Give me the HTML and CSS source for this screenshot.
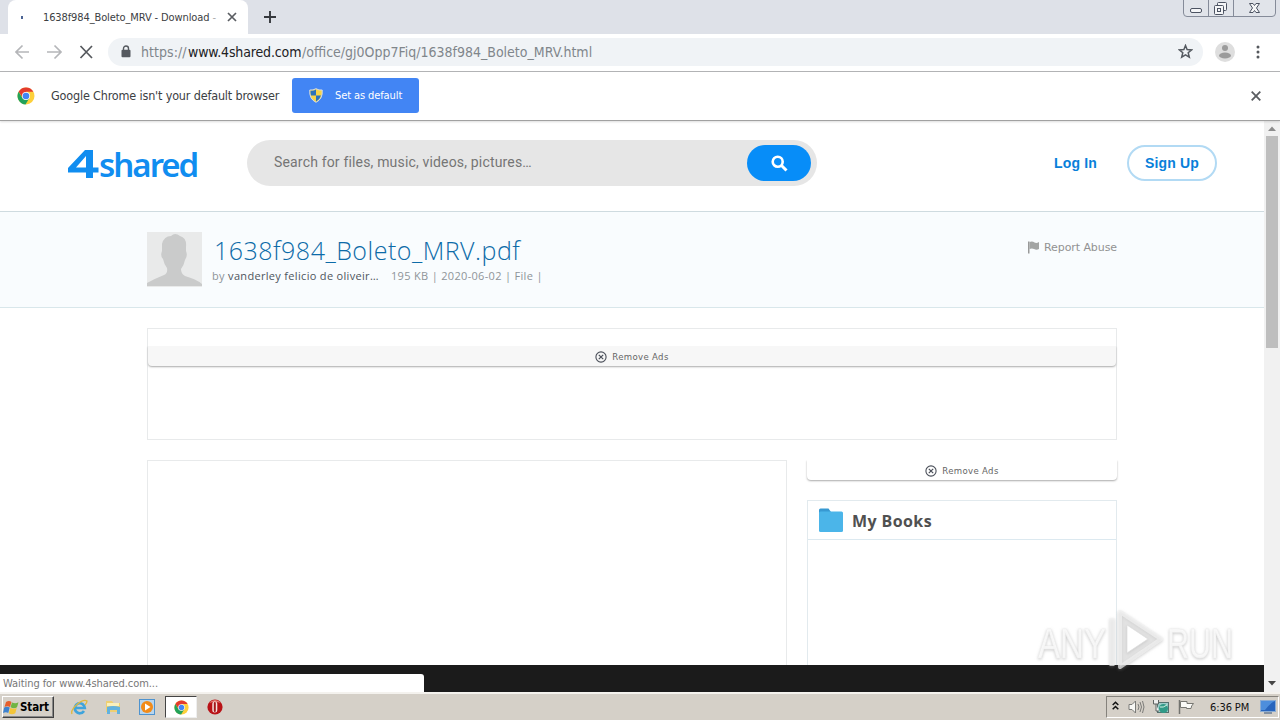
FILE: index.html
```html
<!DOCTYPE html>
<html lang="en">
<head>
<meta charset="utf-8">
<title>1638f984_Boleto_MRV - Download</title>
<link rel="stylesheet" href="styles.css">
</head>
<body>
<svg class="defs" width="0" height="0">
  <symbol id="chrome" viewBox="0 0 18 18">
    <circle cx="9" cy="9" r="8.500" fill="#fdd03b"/>
    <path d="M1.600 4.800A8.500 8.500 0 0 1 16.400 4.800H9L6 11Z" fill="#e33b2e"/>
    <path d="M1.600 4.800A8.500 8.500 0 0 0 8.500 17.500L12.400 11L9 12.800L5.400 11Z" fill="#22a25a"/>
    <circle cx="9" cy="9" r="4" fill="#fff"/><circle cx="9" cy="9" r="3.300" fill="#4285f4"/>
  </symbol>
  <symbol id="remove" viewBox="0 0 12 12">
    <circle cx="6" cy="6" r="5.100" fill="none" stroke="#4a4f59" stroke-width="1.100"/>
    <path d="M3.800 3.800L8.200 8.200M8.200 3.800L3.800 8.200" stroke="#4a4f59" stroke-width="1.200"/>
  </symbol>
</svg>

<div class="tabstrip">
  <div class="tab">
    <i class="spinner"></i>
    <span class="tab-title">1638f984_Boleto_MRV - Download <b>-</b></span>
    <svg class="tab-close" width="10" height="10" viewBox="0 0 10 10"><path d="M1 1L9 9M9 1L1 9" stroke="#5a5d62" stroke-width="1.700"/></svg>
  </div>
  <svg class="new-tab" width="12" height="12" viewBox="0 0 12 12"><path d="M6 0V12M0 6H12" stroke="#35383d" stroke-width="1.900"/></svg>
  <svg class="window-buttons" width="93" height="18" viewBox="0 0 93 18">
    <path d="M.5 0V13Q.5 16.500 4 16.500H89Q92.500 16.500 92.500 13V0M25.500 0V16M50.500 0V16" fill="#e1e4ea" stroke="#858b99"/>
    <g fill="#f4f5f7" stroke="#4c5362"><rect x="7.500" y="8.500" width="11" height="4" rx="1.500"/><rect x="34.500" y="2.500" width="9" height="8" rx="1"/><rect x="31.500" y="5.500" width="9" height="9" rx="1"/><rect x="34.500" y="8.500" width="3" height="3"/>
    <path d="M66.500 3.500H70L71.500 5.500L73 3.500H76.500L73.500 8L76.500 12.500H73L71.500 10.500L70 12.500H66.500L69.500 8Z"/></g>
  </svg>
</div>

<div class="toolbar">
  <svg class="nav" width="80" height="16" viewBox="0 0 80 16" fill="none" stroke-width="1.700">
    <path d="M14 8H1.500M7.500 1.500L1 8L7.500 14.500M32 8H45.500M39.500 1.500L46 8L39.500 14.500" stroke="#b5b6b9"/>
    <path d="M65.500 2L77 14M77 2L65.500 14" stroke="#55585d" stroke-width="1.700"/>
  </svg>
  <div class="omnibox">
    <svg width="10" height="13" viewBox="0 0 10 13"><path d="M2.500 5V3.500a2.500 2.500 0 0 1 5 0V5" fill="none" stroke="#55595f" stroke-width="1.400"/><rect x=".5" y="4.800" width="9" height="7.500" rx="1" fill="#55595f"/></svg>
    <span class="url"><span class="scheme">https://</span><span class="host">www.4shared.com</span><span class="path">/office/gj0Opp7Fiq/1638f984_Boleto_MRV.html</span></span>
    <svg class="star" width="15" height="15" viewBox="0 0 15 15"><path d="M7.500 1.500L9.100 5.500L13.600 5.900L10.200 8.800L11.300 13.200L7.500 10.800L3.700 13.200L4.800 8.800L1.400 5.900L5.900 5.500Z" fill="none" stroke="#555a61" stroke-width="1.500"/></svg>
  </div>
  <svg class="profile" width="20" height="20" viewBox="0 0 20 20"><circle cx="10" cy="10" r="10" fill="#dedede"/><circle cx="10" cy="6" r="3" fill="#9b9b9b"/><ellipse cx="10" cy="13.500" rx="6" ry="3" fill="#9b9b9b"/></svg>
  <svg class="menu" width="4" height="14" viewBox="0 0 4 14" fill="#55585d"><circle cx="2" cy="2" r="1.500"/><circle cx="2" cy="7" r="1.500"/><circle cx="2" cy="12" r="1.500"/></svg>
</div>

<div class="infobar">
  <svg width="18" height="18"><use href="#chrome"/></svg>
  <span class="infobar-text">Google Chrome isn't your default browser</span>
  <div class="default-button">
    <svg width="14" height="15" viewBox="0 0 14 15"><path d="M7 .7Q10 2.500 13.200 2Q14 11 7 14.300Q0 11 .8 2Q4 2.500 7 .7Z" fill="#f7d447" stroke="#d7dde3"/><path d="M7 1.500Q4.500 3 1.500 2.600Q1.300 5.500 2 7.500H7ZM7 7.500H12Q10.700 11.800 7 13.600Z" fill="#2c72ba"/></svg>
    <span>Set as default</span>
  </div>
  <svg class="infobar-close" width="10" height="10" viewBox="0 0 10 10"><path d="M.7.7L9.300 9.300M9.300.7L.7 9.300" stroke="#5a5d61" stroke-width="1.800"/></svg>
</div>

<div class="viewport">
  <div class="page">
    <header class="site-header">
      <div class="logo"><svg width="31" height="28" viewBox="0 0 31 28"><path d="M17 0H25V17.500H30.500V22.500H25V28H18V22.500H0V18ZM18 6L8 17.500H18Z" fill="#108df0" fill-rule="evenodd"/></svg><span>shared</span></div>
      <div class="search">
        <span>Search for files, music, videos, pictures…</span>
        <div class="search-button"><svg width="17" height="17" viewBox="0 0 17 17" fill="none" stroke="#fff"><circle cx="6.700" cy="6.700" r="5" stroke-width="2.600"/><path d="M10.500 10.500L15.500 15.500" stroke-width="3"/></svg></div>
      </div>
      <span class="login">Log In</span>
      <div class="signup"><span>Sign Up</span></div>
    </header>
    <section class="file-header">
      <svg class="avatar" width="55" height="55" viewBox="0 0 55 55"><path d="M0 0H55V55H0Z" fill="#e9eaea"/><path d="M0 54V51Q7 47 17 43Q21 41 20 36Q17 32 16 27Q13 24 15 19V12Q17 4 24 4Q28 0 33 4Q40 6 39 15V19Q41 24 38 28Q37 33 34 37Q34 42 38 44Q49 47 55 52V54Z" fill="#cacbcb"/></svg>
      <div class="file-info">
        <div class="file-name">1638f984_Boleto_MRV.pdf</div>
        <div class="file-meta"><span class="by">by <span class="owner">vanderley felicio de oliveir…</span></span><span class="details">195 KB | 2020-06-02 | File |</span></div>
      </div>
      <div class="report"><svg width="11" height="13" viewBox="0 0 11 13"><path d="M0 .5H1.500V12.500H0Z" fill="#999"/><path d="M1.500 1Q4.500 0 6.500 1.500Q8.500 2.500 11 1V8Q8.500 9.500 6 8Q4 7 1.500 8Z" fill="#a3a5a4"/></svg><span>Report Abuse</span></div>
    </section>
    <main class="content">
      <div class="banner"><div class="remove-ads shaded"><svg width="12" height="12"><use href="#remove"/></svg><span>Remove Ads</span></div></div>
      <div class="columns">
        <div class="preview"></div>
        <aside class="sidebar">
          <div class="remove-ads"><svg width="12" height="12"><use href="#remove"/></svg><span>Remove Ads</span></div>
          <div class="folder-card">
            <div class="folder-title"><svg width="25" height="25" viewBox="0 0 25 25"><path d="M0 5V2Q0 .5 1.500 .5H9.500L12 4V8H0Z" fill="#3799d2"/><rect y="3.500" width="24" height="20.500" rx="1.500" fill="#4bb5e9"/></svg><span>My Books</span></div>
          </div>
        </aside>
      </div>
    </main>
  </div>
  <div class="scrollbar">
    <svg width="8" height="5" viewBox="0 0 8 5"><path d="M0 5L4 .5L8 5Z" fill="#8c8c8c"/></svg>
    <div class="thumb"></div>
    <svg class="down" width="8" height="5" viewBox="0 0 8 5"><path d="M0 0L4 4.500L8 0Z" fill="#454545"/></svg>
  </div>
  <div class="dark-strip"></div>
  <div class="status"><span>Waiting for www.4shared.com...</span></div>
  <svg class="watermark" width="240" height="68" viewBox="0 0 240 68">
    <g class="mark-text"><text transform="translate(8 52) scale(.77 1)">ANY</text><text transform="translate(137 52) scale(.71 1)">RUN</text></g>
    <g class="mark-shape"><path d="M82 12V60" class="mark-bar"/><path d="M90 6L131 33L90 61Z"/><path d="M97 19L118 33L97 47Z" class="mark-inner"/></g>
  </svg>
</div>

<footer class="taskbar">
  <div class="start"><svg width="16" height="15" viewBox="0 0 16 15"><path d="M3 2Q6 0 8.500 2L7 7Q4.500 5.500 1.500 7Z" fill="#e55f2e"/><path d="M9 2.500Q12.500 4 15.500 2.200L14 7.300Q11 9 7.500 7.300Z" fill="#70b544"/><path d="M1.200 7.500Q4 6 6.700 7.500L5.300 13Q3 11.500 0 13Z" fill="#3d82cf"/><path d="M7.200 8Q11 9.500 13.700 8L12.300 13.300Q9 15 5.800 13.400Z" fill="#f3c539"/></svg><span>Start</span></div>
  <div class="launchers">
    <svg width="17" height="17" viewBox="0 0 17 17"><path d="M13 12A5 5 0 1 1 13.800 9H4.500" fill="none" stroke="#3fa4dc" stroke-width="2.700"/><path d="M1 15Q-.5 11 6 5.500T16 2Q16 4 14 6" fill="none" stroke="#dfb83d" stroke-width="1.300"/></svg>
    <svg width="17" height="16" viewBox="0 0 17 16"><path d="M1 2H7L8.500 4H15V13H1Z" fill="#eecf72"/><path d="M2 4H14V7H2Z" fill="#faf0bc"/><path d="M2 8Q8 6 15 8V15H12V11H5V15H2Z" fill="#62b2df"/></svg>
    <svg width="17" height="17" viewBox="0 0 17 17"><rect x=".5" y=".5" width="15" height="15" fill="#b8d5ed" stroke="#4e93cf"/><circle cx="8" cy="8" r="6" fill="#f28b19"/><path d="M6 4.500L11.500 8L6 11.500Z" fill="#fff"/></svg>
    <div class="active-app"><svg width="15" height="15"><use href="#chrome"/></svg></div>
    <svg class="opera" width="16" height="16" viewBox="0 0 16 16"><circle cx="8" cy="8" r="7.600" fill="#b91217"/><path d="M2 4Q8-2 14 4Q8 2 2 4Z" fill="#e57a73"/><rect x="5.300" y="2.500" width="5" height="11" rx="2.500" fill="#f6e3e0"/><rect x="6.800" y="3" width="2" height="10" rx="1" fill="#a4171a"/></svg>
  </div>
  <div class="tray">
    <svg class="expand" width="7" height="9" viewBox="0 0 7 9"><path d="M.7 4L3.500 1.200L6.300 4M.7 8.300L3.500 5.500L6.300 8.300" fill="none" stroke="#111" stroke-width="1.500"/></svg>
    <svg width="17" height="16" viewBox="0 0 17 16" fill="none" stroke="#7b7b78"><path d="M1 5.500H4L7.500 2V14L4 10.500H1Z" fill="#f8f8f5"/><path d="M10 5Q12 8 10 11M12 3Q15 8 12 13M14.500 2Q17.500 8 14.500 14"/></svg>
    <svg width="17" height="16" viewBox="0 0 17 16"><rect x="4.500" y="3.500" width="11" height="10" fill="#9ccdc9" stroke="#55716f"/><circle cx="10.500" cy="9.500" r="4.500" fill="#309a87"/><path d="M7 8Q10 9 14 6" stroke="#d3f0e1" fill="none"/><path d="M.5 1V5H5.500V1M3 5V12H6" fill="#eee" stroke="#5f6462"/></svg>
    <svg width="17" height="16" viewBox="0 0 17 16"><path d="M1.500 1V15" stroke="#73736f" stroke-width="1.500"/><path d="M2.500 2.500H9V4.500H15.500Q13 7 13 9.500H8.500V8.500H2.500Z" fill="#fafaf7" stroke="#777772"/></svg>
    <span class="clock">6:36 PM</span>
    <svg class="monitor" width="16" height="14" viewBox="0 0 16 14"><rect x=".5" y=".5" width="15" height="11" fill="#2865bd" stroke="#8aacd4"/><path d="M1 1H15Q10 3 5 10H1Z" fill="#4d8edc"/><path d="M4 13H12" stroke="#667b94" stroke-width="1.500"/></svg>
  </div>
</footer>
</body>
</html>
```
FILE: styles.css
```css
* { box-sizing: border-box; }
body { margin: 0; width: 1280px; height: 720px; overflow: hidden; display: flex; flex-direction: column; background: #fff; font-family: "DejaVu Sans Condensed", "DejaVu Sans", sans-serif; font-stretch: condensed; }
svg { display: block; flex: none; }
span { white-space: nowrap; }
.defs { position: absolute; }

.tabstrip { height: 34px; flex: none; background: #dee1e8; display: flex; padding-left: 8px; }
.tab { width: 240px; background: #fff; border-radius: 8px 8px 0 0; display: flex; align-items: center; padding-left: 13px; }
.spinner { width: 2px; height: 3px; background: #4c6494; }
.tab-title { font-size: 11px; letter-spacing: -.11px; color: #3c4043; margin-left: 20px; width: 176px; }
.tab-title b { font-weight: normal; color: #aaa; }
.tab-close { margin-left: 8px; }
.new-tab { margin: 11px 0 0 16px; }
.window-buttons { margin: 0 4px 0 auto; }

.toolbar { height: 38px; flex: none; display: flex; align-items: center; border-bottom: 1px solid #b4b5b7; padding: 0 20px 2px 15px; }
.nav { margin-right: 13px; }
.omnibox { width: 1096px; height: 28px; border-radius: 14px; background: #f0f3f6; display: flex; align-items: center; padding: 0 10px 0 13px; }
.url { font-size: 14px; margin-left: 10px; color: #80868b; display: flex; }
.scheme { width: 47px; letter-spacing: .05px; }
.host { width: 114px; color: #202124; letter-spacing: -.14px; }
.path { letter-spacing: 0; }
.star { margin-left: auto; }
.profile { margin-left: 12px; }
.menu { margin-left: 21px; }

.infobar { height: 49px; flex: none; display: flex; align-items: center; padding: 0 19px 1px 17px; border-bottom: 1px solid #a1a1a1; position: relative; z-index: 1; box-shadow: 0 1px 2px #0002; }
.infobar-text { font-size: 12.500px; letter-spacing: -.17px; color: #3c4043; margin-left: 16px; width: 241px; }
.default-button { width: 127px; height: 35px; border-radius: 3px; background: #4285f4; color: #fff; display: flex; align-items: center; padding-left: 17px; gap: 12px; font-size: 11px; letter-spacing: -.1px; }
.infobar-close { margin-left: auto; }

.viewport { height: 571px; flex: none; position: relative; display: flex; overflow: hidden; }
.page { width: 1264px; overflow: hidden; }
.site-header { height: 91px; border-bottom: 1px solid #cfdbe0; display: flex; padding-left: 68px; }
.logo { width: 179px; display: flex; padding-top: 29px; color: #108df0; }
.logo span { font: 600 33px/30px "Noto Sans", sans-serif; letter-spacing: -2px; }
.search { width: 570px; height: 46px; margin-top: 19px; border-radius: 23px; background: #e6e6e6; display: flex; align-items: center; justify-content: space-between; padding: 0 6px 0 27px; font: 14px Roboto, sans-serif; letter-spacing: .17px; color: #757575; }
.search > span { padding-bottom: 2px; }
.search-button { width: 64px; height: 36px; border-radius: 18px; background: #078df8; display: flex; align-items: center; justify-content: center; }
.login, .signup { font: bold 14px "Liberation Sans", sans-serif; letter-spacing: .15px; color: #087fda; }
.login { margin: 34px 30px 0 237px; width: 43px; }
.signup { width: 90px; height: 36px; margin-top: 24px; border: 2px solid #b2daf4; border-radius: 18px; display: flex; align-items: center; justify-content: center; }
.file-header { height: 96px; background: #f9fcfe; border-bottom: 1px solid #d9e7eb; display: flex; padding: 20px 147px 0; }
.file-info { margin-left: 10px; width: 814px; }
.file-name { font: 300 25px/36px "Open Sans", sans-serif; letter-spacing: .5px; color: #0d6ba8; margin-left: 2px; }
.file-meta { font: 11px/15px "Open Sans", sans-serif; letter-spacing: .32px; color: #8e9499; display: flex; }
.by { width: 179px; }
.owner { color: #4e555d; }
.report { display: flex; align-items: center; height: 15px; margin: 8px 0 0 2px; gap: 5px; font: 11px "DejaVu Sans", sans-serif; letter-spacing: -.08px; color: #929292; }

.content { padding: 20px 147px 0; }
.banner { height: 112px; border: 1px solid #e8eaeb; padding-top: 17px; }
.remove-ads { height: 20px; display: flex; align-items: center; justify-content: center; gap: 5px; font-size: 9.500px; letter-spacing: .35px; color: #666; border-radius: 0 0 4px 4px; box-shadow: 0 1px 2px #aaa; clip-path: inset(0 -3px -4px); }
.remove-ads svg { margin-top: 2px; }
.shaded { background: #f7f7f7; }
.columns { display: flex; gap: 20px; margin-top: 20px; }
.preview { width: 640px; height: 300px; border: 1px solid #e8eaeb; }
.sidebar { width: 310px; }
.folder-card { height: 260px; margin-top: 20px; border: 1px solid #e2eaee; }
.folder-title { height: 39px; display: flex; align-items: center; padding-left: 11px; gap: 8px; border-bottom: 1px solid #dce9f0; font: bold 16px "Open Sans", sans-serif; letter-spacing: .4px; color: #505050; }
.folder-title span { padding-top: 2px; }
.scrollbar { width: 16px; background: #f1f1f1; display: flex; flex-direction: column; align-items: center; padding: 5px 0 6px; }
.thumb { width: 12px; height: 212px; margin-top: 5px; background: #bebebe; }
.down { margin-top: auto; }
.dark-strip { position: absolute; left: 0; bottom: 0; width: 1264px; height: 27px; background: #1b1b1b; }
.status { position: absolute; left: 0; bottom: 0; width: 424px; height: 18px; background: #fff; border-radius: 0 3px 0 0; font-size: 11px; letter-spacing: -.07px; line-height: 19px; color: #777; padding-left: 3px; }
.watermark { position: absolute; left: 1030px; top: 485px; filter: drop-shadow(0 1px 1.500px #8888); }
.mark-text { font: 43px "Liberation Sans", sans-serif; fill: #fff; fill-opacity: .8; stroke: #eee; stroke-width: .5px; }
.mark-shape { fill: #ddd6; stroke: #f2f2f2; stroke-opacity: .7; stroke-width: 4px; stroke-linejoin: round; }
.mark-bar { stroke-width: 5px; }
.mark-inner { fill: #fff; stroke: #ddd; stroke-width: 1px; }

.taskbar { height: 28px; flex: none; background: #d5d0c8; border-top: 2px solid #f4f2ee; display: flex; align-items: center; }
.start { width: 52px; height: 22px; margin-left: 2px; border: 1px solid; border-color: #fff #404040 #404040 #fff; box-shadow: inset -1px -1px #888; display: flex; align-items: center; gap: 1px; font-size: 11.500px; font-weight: bold; letter-spacing: -.1px; color: #000; }
.launchers { display: flex; align-items: center; margin-left: 17px; gap: 17px; }
.active-app { width: 32px; height: 22px; margin-left: -8px; background: #fff; border: 1px solid; border-color: #444 #eee #eee #444; display: flex; align-items: center; justify-content: center; }
.opera { margin-left: -7px; }
.tray { margin-left: auto; margin-right: 1px; width: 173px; height: 22px; border: 1px solid; border-color: #85827c #fff #fff #85827c; display: flex; align-items: center; gap: 8px; padding-left: 5px; }
.expand { margin: -3px 1px 0 0; }
.clock { font-size: 11px; letter-spacing: -.1px; color: #111; width: 42px; margin: 0 0 0 7px; }
```
